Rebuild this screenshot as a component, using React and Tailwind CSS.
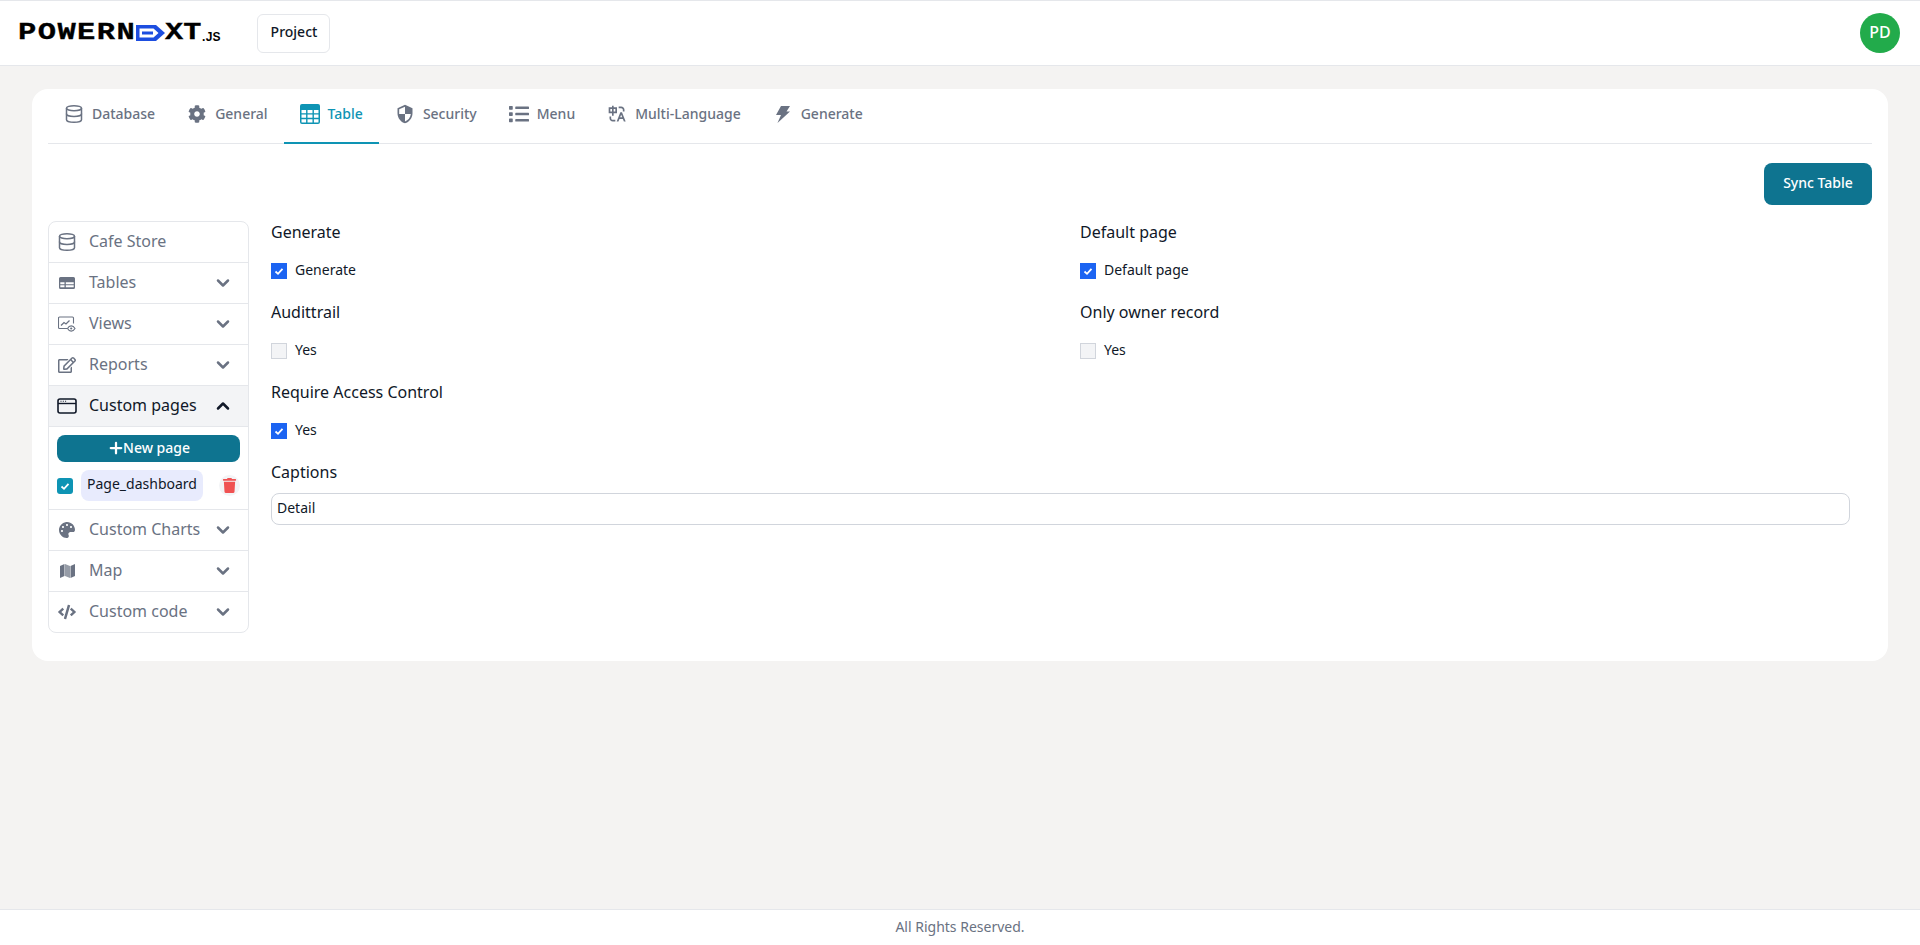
import { Database, ChevronDown, ChevronUp, Plus } from "lucide-react"
import { FaCog, FaList, FaRegEdit, FaPalette, FaCode, FaTrash } from "react-icons/fa"
import { MdSecurity } from "react-icons/md"
import { RiTranslate } from "react-icons/ri"

function TableIcon({ className }) {
    return (
        <svg viewBox="0 0 20 20" className={className} fill="currentColor">
            <path fillRule="evenodd" d="M2 0h16a2 2 0 0 1 2 2v16a2 2 0 0 1-2 2H2a2 2 0 0 1-2-2V2a2 2 0 0 1 2-2Zm-.5 6v3.2h4.6V6H1.500Zm6 0v3.200h5V6h-5Zm6.400 0v3.200h4.600V6h-4.600ZM1.500 10.600v3.200h4.600v-3.200H1.500Zm6 0v3.200h5v-3.200h-5Zm6.400 0v3.200h4.600v-3.200h-4.600ZM1.500 15.200V18a.5.5 0 0 0 .5.500h4.100v-3.300H1.500Zm6 0v3.300h5v-3.300h-5Zm6.400 0v3.300H18a.5.5 0 0 0 .5-.5v-2.800h-4.600Z" />
        </svg>
    )
}

function SolidTable({ className }) {
    return (
        <svg viewBox="0 0 16 14" className={className} fill="currentColor">
            <path fillRule="evenodd" d="M1.500 1h13A1.500 1.500 0 0 1 16 2.500v9a1.500 1.500 0 0 1-1.500 1.500h-13A1.500 1.500 0 0 1 0 11.500v-9A1.500 1.500 0 0 1 1.500 1ZM1.300 6.200v2h4.200v-2H1.300Zm5.500 0v2h7.900v-2H6.800ZM1.300 9.300v2h4.200v-2H1.300Zm5.500 0v2h7.900v-2H6.800Z" />
        </svg>
    )
}

function ViewsIcon({ className }) {
    return (
        <svg viewBox="0 0 18 16" className={className} fill="none" stroke="currentColor" strokeWidth="1.100">
            <path d="M9 12.500H1.500a1 1 0 0 1-1-1V2a1 1 0 0 1 1-1h13a1 1 0 0 1 1 1v5.500" />
            <path d="M3 9.500 6 6.500l2 1.500 3.500-3.500" strokeWidth="1.300" />
            <path d="M9.500 12.500c1-1.800 2.300-2.600 3.700-2.600s2.800.8 3.800 2.600c-1 1.800-2.400 2.600-3.800 2.600s-2.700-.8-3.700-2.600Z" />
            <circle cx="13.200" cy="12.500" r="1.100" fill="currentColor" stroke="none" />
        </svg>
    )
}

function WindowIcon({ className }) {
    return (
        <svg viewBox="0 0 20 16" className={className} fill="none">
            <rect x="1" y="1" width="18" height="14" rx="2" stroke="currentColor" strokeWidth="1.600" />
            <path d="M1 5.500h18" stroke="currentColor" strokeWidth="1.400" />
            <path d="M3.500 3.300h1M5.800 3.300h1M8.100 3.300h1" stroke="currentColor" strokeWidth="1.100" />
        </svg>
    )
}

function BoltIcon({ className }) {
    return (
        <svg viewBox="0 0 14 17" className={className} fill="currentColor">
            <path d="M5 0h9l-3.500 5.500H14L1.500 17 5 9H0L5 0Z" />
        </svg>
    )
}

function MapIcon({ className }) {
    return (
        <svg viewBox="0 0 15 14" className={className} fill="currentColor">
            <path d="M0 2 4.500 0v12L0 14V2Z" />
            <path d="M5 0l5 2v12l-5-2V0Z" opacity="0.7" />
            <path d="M10.500 2 15 0v12l-4.500 2V2Z" />
        </svg>
    )
}

function Check({ className }) {
    return (
        <svg viewBox="0 0 12 12" className={className} fill="none" stroke="white" strokeWidth="1.800">
            <path d="M2.500 6.500 5 8.800l4.500-5" />
        </svg>
    )
}

function Logo() {
    return (
        <div className="flex items-center h-4 w-[203px] select-none font-['Liberation_Mono'] font-bold text-black leading-none">
            <span className="w-[118px] shrink-0 inline-block origin-left scale-x-[1.27] tracking-[1.1px] text-[24px] [-webkit-text-stroke:0.3px_black]">POWERN</span>
            <svg viewBox="0 0 29 16" className="w-[29px] h-4 shrink-0 text-[#1d4ee0]" fill="currentColor">
                <path fillRule="evenodd" d="M0 0h20l9 8-9 8H0V0Zm3.500 3.500v9h14l5-4.500-5-4.500h-14Z" />
                <rect x="6" y="6.500" width="11" height="3" />
            </svg>
            <span className="w-9 shrink-0 inline-block origin-left scale-x-[1.26] text-[24px] [-webkit-text-stroke:0.3px_black]">XT</span>
            <span className="font-['Liberation_Sans'] text-[12px] ml-px mt-[7px] tracking-[0.3px]">.JS</span>
        </div>
    )
}

const tabs = [
    { name: "Database", icon: <Database className="w-5 h-5" strokeWidth={1.8} /> },
    { name: "General", icon: <FaCog className="w-[18px] h-[18px]" /> },
    { name: "Table", icon: <TableIcon className="w-5 h-5" />, active: true },
    { name: "Security", icon: <MdSecurity className="w-[22px] h-[22px]" /> },
    { name: "Menu", icon: <FaList className="w-5 h-5" /> },
    { name: "Multi-Language", icon: <RiTranslate className="w-5 h-5" /> },
    { name: "Generate", icon: <BoltIcon className="w-[14px] h-[17px]" /> },
]

function Row({ icon, label, arrow = true }) {
    return (
        <div className="h-[41px] flex items-center pl-2 pr-[15px] border-b border-gray-200 text-gray-500">
            <span className="w-5 flex justify-center text-gray-500">{icon}</span>
            <span className="ml-3 flex-1 text-base pb-0.5">{label}</span>
            {arrow && <ChevronDown className="w-5 h-5" strokeWidth={3} />}
        </div>
    )
}

function Sidebar() {
    return (
        <div className="w-[201px] shrink-0 rounded-lg border border-gray-200 overflow-hidden">
            <Row icon={<Database className="w-5 h-5" strokeWidth={1.8} />} label="Cafe Store" arrow={false} />
            <Row icon={<SolidTable className="w-4 h-[14px]" />} label="Tables" />
            <Row icon={<ViewsIcon className="w-[18px] h-4" />} label="Views" />
            <Row icon={<FaRegEdit className="w-[18px] h-[18px]" />} label="Reports" />
            <div className="h-[41px] flex items-center pl-2 pr-[15px] border-b border-gray-200 bg-gray-100 text-gray-900">
                <span className="w-5 flex justify-center"><WindowIcon className="w-5 h-4" /></span>
                <span className="ml-3 flex-1 text-base pb-0.5">Custom pages</span>
                <ChevronUp className="w-5 h-5" strokeWidth={3} />
            </div>
            <div className="px-2 pt-2 border-b border-gray-200 h-[83px]">
                <button className="w-full h-[27px] pb-0.5 rounded-lg bg-[#0e7490] text-white text-sm font-medium flex items-center justify-center">
                    <Plus className="w-[18px] h-[18px] -mr-0.5" strokeWidth={3} />New page
                </button>
                <div className="flex items-center mt-2">
                    <span className="w-4 h-4 rounded-[3px] bg-[#0e94b4] flex items-center justify-center">
                        <Check className="w-3 h-3" />
                    </span>
                    <span className="ml-2 w-[122px] h-[31px] pb-1 rounded-lg bg-[#e8ebfd] text-sm text-gray-900 flex items-center justify-center">Page_dashboard</span>
                    <span className="ml-auto w-[21px] h-[21px] rounded-full bg-gray-100 flex items-center justify-center text-[#f05252]">
                        <FaTrash className="w-[15px] h-[15px]" />
                    </span>
                </div>
            </div>
            <Row icon={<FaPalette className="w-4 h-4" />} label="Custom Charts" />
            <Row icon={<MapIcon className="w-[15px] h-[14px]" />} label="Map" />
            <div className="h-[40px] flex items-center pl-2 pr-[15px] text-gray-500">
                <span className="w-5 flex justify-center"><FaCode className="w-[18px] h-[18px]" /></span>
                <span className="ml-3 flex-1 text-base pb-0.5">Custom code</span>
                <ChevronDown className="w-5 h-5" strokeWidth={3} />
            </div>
        </div>
    )
}

function CheckField({ title, label, checked }) {
    return (
        <div className="h-20">
            <div className="h-6 leading-6 text-base text-gray-900">{title}</div>
            <div className="mt-[17px] h-5 flex items-center text-sm text-gray-900">
                {checked ? (
                    <span className="w-4 h-4 bg-[#1c64f2] flex items-center justify-center"><Check className="w-3 h-3" /></span>
                ) : (
                    <span className="w-4 h-4 bg-gray-100 border border-gray-300" />
                )}
                <span className="ml-2 pb-0.5">{label}</span>
            </div>
        </div>
    )
}

export default function App() {
    return (
        <div className="min-h-screen flex flex-col bg-[#f4f3f2] font-['Noto_Sans',sans-serif]">
            <header className="h-[66px] bg-white border-t border-b border-gray-200 flex items-center pl-[18px] pr-5">
                <Logo />
                <button className="ml-9 w-[73px] h-[39px] pb-0.5 pl-px rounded-md border border-gray-200 text-sm font-medium text-gray-900">Project</button>
                <div className="ml-auto w-10 h-10 pb-0.5 rounded-full bg-[#22ab4b] text-white font-medium flex items-center justify-center">PD</div>
            </header>
            <main className="flex-1 px-8 pt-[23px]">
                <div className="bg-white rounded-2xl px-4 pb-7">
                    <div className="flex border-b border-gray-200 h-[55px]">
                        {tabs.map(t => (
                            <div key={t.name} className={"h-[55px] px-4 pb-[3px] flex items-center gap-2 text-sm font-medium border-b-2 " + (t.active ? "text-[#0e94b4] border-[#0e94b4]" : "text-gray-500 border-transparent")}>
                                <span className="w-5 flex justify-center">{t.icon}</span>
                                {t.name}
                            </div>
                        ))}
                    </div>
                    <div className="flex justify-end mt-[19px]">
                        <button className="w-[108px] h-[42px] pb-0.5 rounded-lg bg-[#0e7490] text-white text-sm font-medium">Sync Table</button>
                    </div>
                    <div className="flex mt-4">
                        <Sidebar />
                        <div className="flex-1 ml-[22px] pr-[22px] -mt-px">
                            <div className="grid grid-cols-[809px_1fr]">
                                <CheckField title="Generate" label="Generate" checked />
                                <CheckField title="Default page" label="Default page" checked />
                                <CheckField title="Audittrail" label="Yes" />
                                <CheckField title="Only owner record" label="Yes" />
                                <CheckField title="Require Access Control" label="Yes" checked />
                            </div>
                            <div className="h-6 leading-6 text-base text-gray-900">Captions</div>
                            <input defaultValue="Detail" className="mt-[9px] w-full h-8 px-[5px] pb-1 text-sm text-gray-900 rounded-lg border border-gray-300 outline-none" />
                        </div>
                    </div>
                </div>
            </main>
            <footer className="h-9 pb-0.5 bg-white border-t border-gray-200 flex items-center justify-center text-sm text-gray-500">All Rights Reserved.</footer>
        </div>
    )
}
